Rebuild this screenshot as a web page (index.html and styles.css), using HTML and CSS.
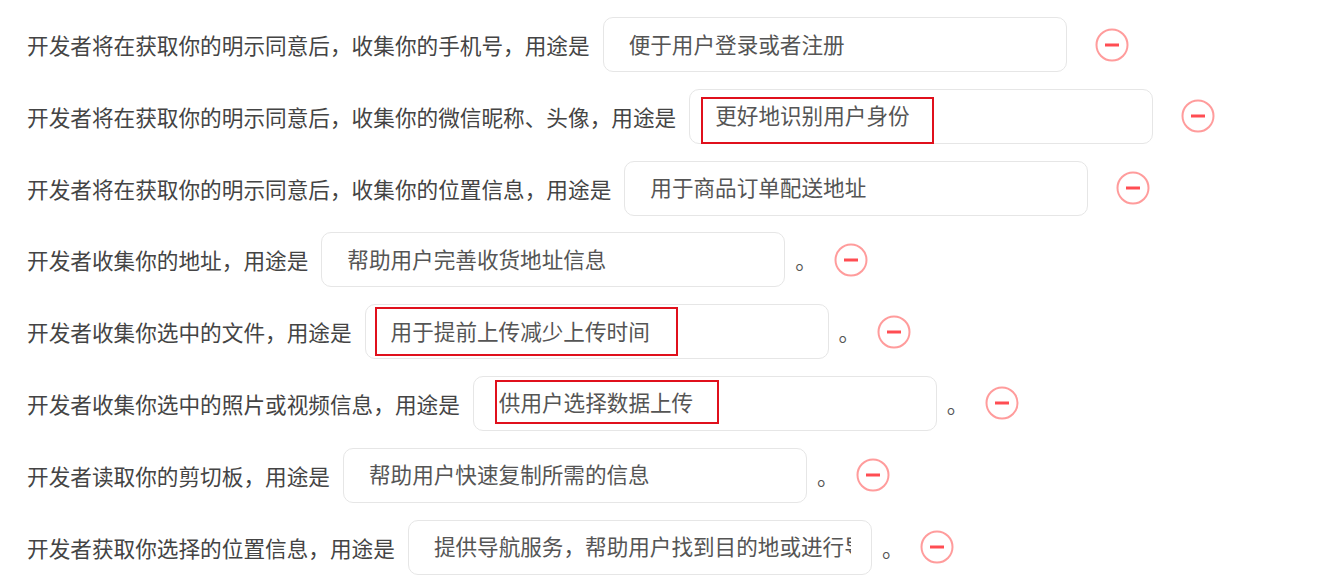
FILE: index.html
```html
<!DOCTYPE html>
<html lang="zh-CN">

<head>
    <meta charset="UTF-8">
    <meta name="viewport" content="width=device-width, initial-scale=1.0">
    <title>用户隐私保护指引</title>
    <link rel="stylesheet" href="styles.css">
</head>

<body>
    <div class="lista_usos">
        <div class="fila">
            <span class="texto">开发者将在获取你的明示同意后，收集你的手机号，用途是</span>
            <div class="caja"><input type="text" class="campo" value="便于用户登录或者注册" readonly></div>
            <span class="quitar"></span>
        </div>
        <div class="fila">
            <span class="texto">开发者将在获取你的明示同意后，收集你的微信昵称、头像，用途是</span>
            <div class="caja">
                <input type="text" class="campo" value="更好地识别用户身份" readonly>
                <span class="marca marca_1"></span>
            </div>
            <span class="quitar"></span>
        </div>
        <div class="fila">
            <span class="texto">开发者将在获取你的明示同意后，收集你的位置信息，用途是</span>
            <div class="caja"><input type="text" class="campo" value="用于商品订单配送地址" readonly></div>
            <span class="quitar"></span>
        </div>
        <div class="fila">
            <span class="texto">开发者收集你的地址，用途是</span>
            <div class="caja"><input type="text" class="campo" value="帮助用户完善收货地址信息" readonly></div>
            <span class="punto">。</span>
            <span class="quitar"></span>
        </div>
        <div class="fila">
            <span class="texto">开发者收集你选中的文件，用途是</span>
            <div class="caja">
                <input type="text" class="campo" value="用于提前上传减少上传时间" readonly>
                <span class="marca marca_2"></span>
            </div>
            <span class="punto">。</span>
            <span class="quitar"></span>
        </div>
        <div class="fila">
            <span class="texto">开发者收集你选中的照片或视频信息，用途是</span>
            <div class="caja">
                <input type="text" class="campo" value="供用户选择数据上传" readonly>
                <span class="marca marca_3"></span>
            </div>
            <span class="punto">。</span>
            <span class="quitar"></span>
        </div>
        <div class="fila">
            <span class="texto">开发者读取你的剪切板，用途是</span>
            <div class="caja"><input type="text" class="campo" value="帮助用户快速复制所需的信息" readonly></div>
            <span class="punto">。</span>
            <span class="quitar"></span>
        </div>
        <div class="fila">
            <span class="texto">开发者获取你选择的位置信息，用途是</span>
            <div class="caja"><input type="text" class="campo" value="提供导航服务，帮助用户找到目的地或进行导航" readonly></div>
            <span class="punto">。</span>
            <span class="quitar"></span>
        </div>
    </div>
    <script>
        // icono de quitar en cada fila
        document.querySelectorAll('.quitar').forEach(function (el) {
            el.innerHTML = '<svg width="34" height="34" viewBox="0 0 34 34">' +
                '<circle cx="17" cy="17" r="15.5" fill="none" stroke="#ff9c9c" stroke-width="2"/>' +
                '<line x1="10" y1="17" x2="24" y2="17" stroke="#ff4d52" stroke-width="3"/>' +
                '</svg>';
        });
    </script>
</body>

</html>
```

FILE: styles.css
```css
* {
    padding: 0;
    margin: 0;
    box-sizing: border-box;
}

body {
    background: #fff;
    font-family: "Noto Sans CJK SC", "Noto Sans", sans-serif;
    font-size: 21.65px;
    color: #444;
}

.lista_usos {
    display: flex;
    flex-direction: column;
    gap: 16.8px;
    padding: 17px 0 0 27px;
}

.fila {
    display: flex;
    align-items: center;
    height: 55px;
}

.texto {
    white-space: nowrap;
    color: #444;
}

.caja {
    position: relative;
    margin-left: 13px;
    width: 464px;
    height: 55px;
}

.campo {
    width: 100%;
    height: 100%;
    border: 1px solid #e6e6e6;
    border-radius: 10px;
    padding: 0 20px 3px 25px;
    font-family: "Noto Sans CJK SC", "Noto Sans", sans-serif;
    font-size: 21.6px;
    color: #555;
    background: #fff;
    outline: none;
}

.punto {
    margin-left: 10px;
    width: 21.6px;
    color: #555;
}

.quitar {
    display: flex;
    margin-left: 17px;
}

.caja + .quitar {
    margin-left: 28px;
}

.marca {
    position: absolute;
    border: 2px solid #e0101c;
    pointer-events: none;
}

.marca_1 {
    left: 12px;
    top: 8px;
    width: 233px;
    height: 47px;
}

.marca_2 {
    left: 10px;
    top: 3px;
    width: 303px;
    height: 49px;
}

.marca_3 {
    left: 22px;
    top: 4px;
    width: 224px;
    height: 44px;
}
```
